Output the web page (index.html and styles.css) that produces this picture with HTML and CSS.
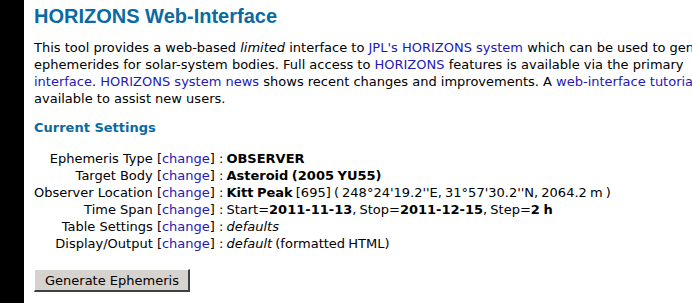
FILE: index.html
```html
<!DOCTYPE html>
<html lang="en">
<head>
  <meta charset="UTF-8" />
  <title>HORIZONS Web-Interface</title>
  <link rel="stylesheet" href="styles.css">
</head>
<body>
  <div class="page">
    <div class="sidebar"></div>
    <div class="main">
      <h1>HORIZONS Web-Interface</h1>
      <p class="intro">
        This tool provides a web-based <i>limited</i> interface to <a href="#">JPL's HORIZONS system</a> which can be used to generate
        ephemerides for solar-system bodies. Full access to <a href="#">HORIZONS</a> features is available via the primary
        <a href="#">interface</a>. <a href="#">HORIZONS system news</a> shows recent changes and improvements. A <a href="#">web-interface tutorial</a> is
        available to assist new users.
      </p>

      <h3>Current Settings</h3>
      <div class="settings">
        <div class="label">Ephemeris Type [<a href="#">change</a>]</div>
        <div class="value">: <b>OBSERVER</b></div>

        <div class="label">Target Body [<a href="#">change</a>]</div>
        <div class="value">: <b>Asteroid (2005 YU55)</b></div>

        <div class="label">Observer Location [<a href="#">change</a>]</div>
        <div class="value">: <b>Kitt Peak</b> [695] ( 248&deg;24'19.2''E, 31&deg;57'30.2''N, 2064.2 m )</div>

        <div class="label">Time Span [<a href="#">change</a>]</div>
        <div class="value">: Start=<b>2011-11-13</b>, Stop=<b>2011-12-15</b>, Step=<b>2 h</b></div>

        <div class="label">Table Settings [<a href="#">change</a>]</div>
        <div class="value">: <i>defaults</i></div>

        <div class="label">Display/Output [<a href="#">change</a>]</div>
        <div class="value">: <i>default</i> (formatted HTML)</div>
      </div>

      <button class="generate">Generate Ephemeris</button>
    </div>
  </div>
</body>
</html>
```

FILE: styles.css
```css
html { overflow: hidden; }
body { margin: 0; background: white; color: black; font-family: "DejaVu Sans", sans-serif; font-size: 13px; line-height: 17px; }
a { color: #2418b8; text-decoration: none; }

.page { display: flex; min-height: 303px; }
.sidebar { width: 24px; flex: none; background: black; }
.main { padding-left: 10px; width: 705px; flex: none; }

h1 { font-family: "Liberation Sans", Arial, sans-serif; font-size: 20px; line-height: 23px; color: #0a6aa1; margin: 5px 0 11px 0; }
.intro { margin: 0 0 12px 0; }

h3 { font-size: 13px; line-height: 17px; color: #0a6aa1; margin: 0 0 14px 0; }

.settings { display: grid; grid-template-columns: auto 1fr; justify-content: start; }
.settings .label { text-align: right; white-space: nowrap; padding-right: 4px; }
.settings .value { white-space: nowrap; word-spacing: -1px; }

.generate { display: block; margin-top: 17px; font-family: "DejaVu Sans", sans-serif; font-size: 13px; line-height: 17px; padding: 2px 9px 2px 10px; height: 23px; white-space: nowrap; background: #d6d3ce; color: black; border-style: solid; border-width: 1px 2px 2px 1px; border-color: #ffffff #404040 #404040 #ffffff; border-radius: 0; }
```
